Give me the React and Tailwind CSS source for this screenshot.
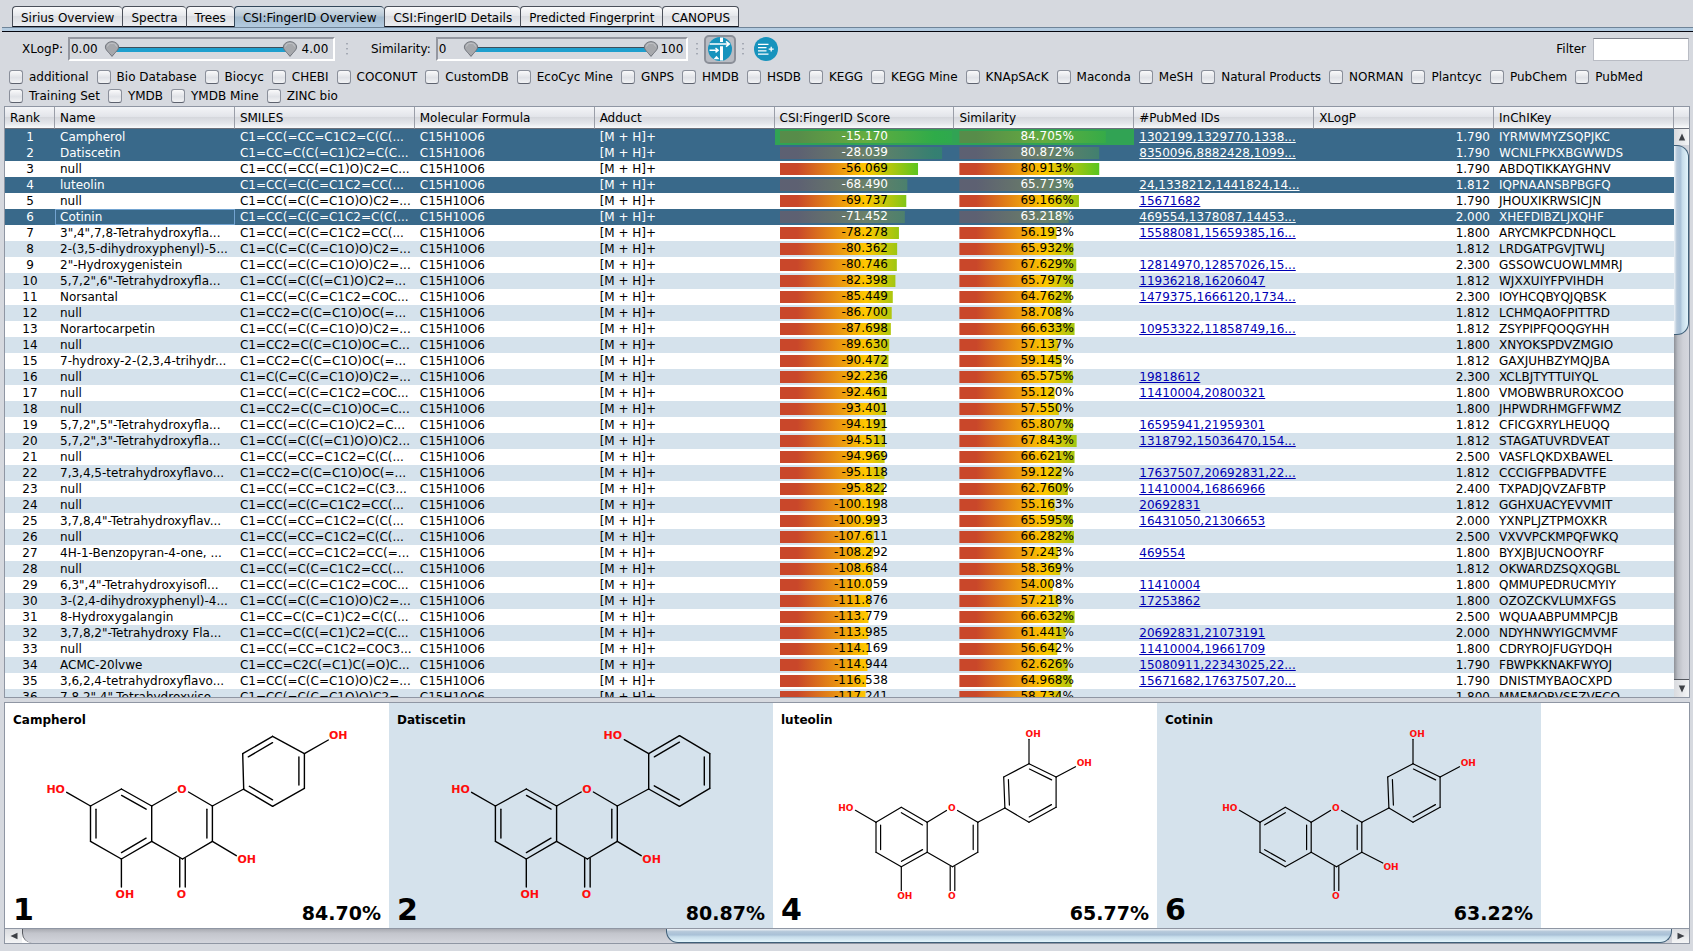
import React from "react";

const TABS = [
  "Sirius Overview",
  "Spectra",
  "Trees",
  "CSI:FingerID Overview",
  "CSI:FingerID Details",
  "Predicted Fingerprint",
  "CANOPUS",
];

const DATABASES = [
  "additional", "Bio Database", "Biocyc", "CHEBI", "COCONUT", "CustomDB", "EcoCyc Mine", "GNPS",
  "HMDB", "HSDB", "KEGG", "KEGG Mine", "KNApSAcK", "Maconda", "MeSH", "Natural Products", "NORMAN",
  "Plantcyc", "PubChem", "PubMed", "Training Set", "YMDB", "YMDB Mine", "ZINC bio",
];

const COLUMNS = [
  "Name", "SMILES", "Molecular Formula", "Adduct", "CSI:FingerID Score", "Similarity", "#PubMed IDs", "XLogP", "InChIKey",
];

// name, SMILES, score, similarity, PubMed ids, XLogP, InChIKey
const ROWS = [
  ["Campherol", "C1=CC(=CC=C1C2=C(C(...", "-15.170", "84.705", "1302199,1329770,1338...", "1.790", "IYRMWMYZSQPJKC"],
  ["Datiscetin", "C1=CC=C(C(=C1)C2=C(C...", "-28.039", "80.872", "8350096,8882428,1099...", "1.790", "WCNLFPKXBGWWDS"],
  ["null", "C1=CC(=CC(=C1)O)C2=C...", "-56.069", "80.913", "", "1.790", "ABDQTIKKAYGHNV"],
  ["luteolin", "C1=CC(=C(C=C1C2=CC(...", "-68.490", "65.773", "24,1338212,1441824,14...", "1.812", "IQPNAANSBPBGFQ"],
  ["null", "C1=CC(=C(C=C1O)O)C2=...", "-69.737", "69.166", "15671682", "1.790", "JHOUXIKRWSICJN"],
  ["Cotinin", "C1=CC(=C(C=C1C2=C(C(...", "-71.452", "63.218", "469554,1378087,14453...", "2.000", "XHEFDIBZLJXQHF"],
  ["3\",4\",7,8-Tetrahydroxyfla...", "C1=CC(=C(C=C1C2=CC(...", "-78.278", "56.193", "15588081,15659385,16...", "1.800", "ARYCMKPCDNHQCL"],
  ["2-(3,5-dihydroxyphenyl)-5...", "C1=C(C=C(C=C1O)O)C2=...", "-80.362", "65.932", "", "1.812", "LRDGATPGVJTWLJ"],
  ["2\"-Hydroxygenistein", "C1=CC(=C(C=C1O)O)C2=...", "-80.746", "67.629", "12814970,12857026,15...", "2.300", "GSSOWCUOWLMMRJ"],
  ["5,7,2\",6\"-Tetrahydroxyfla...", "C1=CC(=C(C(=C1)O)C2=...", "-82.398", "65.797", "11936218,16206047", "1.812", "WJXXUIYFPVIHDH"],
  ["Norsantal", "C1=CC(=C(C=C1C2=COC...", "-85.449", "64.762", "1479375,1666120,1734...", "2.300", "IOYHCQBYQJQBSK"],
  ["null", "C1=CC2=C(C=C1O)OC(=...", "-86.700", "58.708", "", "1.812", "LCHMQAOFPITTRD"],
  ["Norartocarpetin", "C1=CC(=C(C=C1O)O)C2=...", "-87.698", "66.633", "10953322,11858749,16...", "1.812", "ZSYPIPFQOQGYHH"],
  ["null", "C1=CC2=C(C=C1O)OC=C...", "-89.630", "57.137", "", "1.800", "XNYOKSPDVZMGIO"],
  ["7-hydroxy-2-(2,3,4-trihydr...", "C1=CC2=C(C=C1O)OC(=...", "-90.472", "59.145", "", "1.812", "GAXJUHBZYMQJBA"],
  ["null", "C1=C(C=C(C=C1O)O)C2=...", "-92.236", "65.575", "19818612", "2.300", "XCLBJTYTTUIYQL"],
  ["null", "C1=CC(=C(C=C1C2=COC...", "-92.461", "55.120", "11410004,20800321", "1.800", "VMOBWBRUROXCOO"],
  ["null", "C1=CC2=C(C=C1O)OC=C...", "-93.401", "57.550", "", "1.800", "JHPWDRHMGFFWMZ"],
  ["5,7,2\",5\"-Tetrahydroxyfla...", "C1=CC(=C(C=C1O)C2=C...", "-94.191", "65.807", "16595941,21959301", "1.812", "CFICGXRYLHEUQQ"],
  ["5,7,2\",3\"-Tetrahydroxyfla...", "C1=CC(=C(C(=C1)O)O)C2...", "-94.511", "67.843", "1318792,15036470,154...", "1.812", "STAGATUVRDVEAT"],
  ["null", "C1=CC(=CC=C1C2=C(C(...", "-94.969", "66.621", "", "2.500", "VASFLQKDXBAWEL"],
  ["7,3,4,5-tetrahydroxyflavo...", "C1=CC2=C(C=C1O)OC(=...", "-95.118", "59.122", "17637507,20692831,22...", "1.812", "CCCIGFPBADVTFE"],
  ["null", "C1=CC(=CC=C1C2=C(C3...", "-95.822", "62.760", "11410004,16866966", "2.400", "TXPADJQVZAFBTP"],
  ["null", "C1=CC(=C(C=C1C2=CC(...", "-100.198", "55.163", "20692831", "1.812", "GGHXUACYEVVMIT"],
  ["3,7,8,4\"-Tetrahydroxyflav...", "C1=CC(=CC=C1C2=C(C(...", "-100.993", "65.595", "16431050,21306653", "2.000", "YXNPLJZTPMOXKR"],
  ["null", "C1=CC(=CC=C1C2=C(C(...", "-107.611", "66.282", "", "2.500", "VXVVPCKMPQFWKQ"],
  ["4H-1-Benzopyran-4-one, ...", "C1=CC(=CC=C1C2=CC(=...", "-108.292", "57.243", "469554", "1.800", "BYXJBJUCNOOYRF"],
  ["null", "C1=CC(=C(C=C1C2=CC(...", "-108.684", "58.369", "", "1.812", "OKWARDZSQXQGBL"],
  ["6,3\",4\"-Tetrahydroxyisofl...", "C1=CC(=C(C=C1C2=COC...", "-110.059", "54.008", "11410004", "1.800", "QMMUPEDRUCMYIY"],
  ["3-(2,4-dihydroxyphenyl)-4...", "C1=CC(=C(C=C1O)O)C2=...", "-111.876", "57.218", "17253862", "1.800", "OZOZCKVLUMXFGS"],
  ["8-Hydroxygalangin", "C1=CC=C(C=C1)C2=C(C(...", "-113.779", "66.632", "", "2.500", "WQUAABPUMMPCJB"],
  ["3,7,8,2\"-Tetrahydroxy Fla...", "C1=CC=C(C(=C1)C2=C(C...", "-113.985", "61.441", "20692831,21073191", "2.000", "NDYHNWYIGCMVMF"],
  ["null", "C1=CC(=CC=C1C2=COC3...", "-114.169", "56.642", "11410004,19661709", "1.800", "CDRYROJFUGYDQH"],
  ["ACMC-20lvwe", "C1=CC=C2C(=C1)C(=O)C...", "-114.944", "62.626", "15080911,22343025,22...", "1.790", "FBWPKKNAKFWYOJ"],
  ["3,6,2,4-tetrahydroxyflavo...", "C1=CC(=C(C=C1O)O)C2=...", "-116.538", "64.968", "15671682,17637507,20...", "1.790", "DNISTMYBAOCXPD"],
  ["7,8,2\",4\"-Tetrahydroxyiso...", "C1=CC(=C(C=C1O)O)C2=...", "-117.241", "58.734", "", "1.800", "MMEMQRVSEZVECO"],
];

const SELECTED = new Set([1, 2, 4, 6]);

const scoreShare = (score) => Math.min(100, 108 - 0.497 * Math.abs(score));

function Bar({ share, text, selected, best, textWidth }) {
  return (
    <div className={`grid h-4 pr-0.5 pl-[5px] ${best ? "bg-[#31a354]" : ""}`}>
      <div
        className={`col-start-1 row-start-1 h-3 self-center bg-[linear-gradient(90deg,#c9472a_0%,#c9472a_10%,#ffc800_50%,#28c428_90%,#28b93c_100%)] ${selected ? "opacity-25" : ""}`}
        style={{ clipPath: `inset(0 ${100 - share}% 0 0)` }}
      />
      <span className={`relative col-start-1 row-start-1 flex justify-end justify-self-center leading-[15px] ${textWidth}`}>{text}</span>
    </div>
  );
}

function Dots() {
  return (
    <svg className="h-3 w-0.5" viewBox="0 0 2 12" aria-hidden="true">
      {[0, 5, 10].map((y) => (
        <rect key={y} y={y} width="2" height="1.4" fill="#a4a9b3" />
      ))}
    </svg>
  );
}

function Knob() {
  return (
    <svg className="z-10 h-4 w-4 shrink-0" viewBox="0 0 16 16" aria-hidden="true">
      <path d="M8 .7C4.2.7 1.4 3.2 1.4 6.2c0 2.6 3.6 5.4 6.6 9.2 3-3.8 6.6-6.6 6.6-9.2C14.6 3.2 11.8.7 8 .7z" fill="#a6a8ac" stroke="#6c7078" strokeWidth="1" />
      <path d="M3.5 5.5C4 3.2 6 2.2 8 2.2s4 1 4.5 3.3" fill="none" stroke="#c4c6ca" strokeWidth="1" />
    </svg>
  );
}

function RangeBox({ label, low, high, max, width, lowWidth, highWidth }) {
  return (
    <fieldset className="flex items-center gap-[5px]">
      <legend className="float-left">{label}</legend>
      <div className={`flex h-6 items-center border-2 border-[#9497a0] border-r-white border-b-white px-px ${width}`}>
        <output className={lowWidth}>{low}</output>
        <div className="relative flex flex-1 items-center">
          <Knob />
          <div className="-mx-2 h-[5px] flex-1 border-t border-[#3d4f5c] bg-[#1e9fce]" />
          <Knob />
          <input type="range" aria-label={`${label} minimum`} min="0" max={max} defaultValue="0" className="absolute left-0 h-4 w-1/2 opacity-0" />
          <input type="range" aria-label={`${label} maximum`} min="0" max={max} defaultValue={max} className="absolute right-0 h-4 w-1/2 opacity-0" />
        </div>
        <output className={`text-center ${highWidth}`}>{high}</output>
      </div>
    </fieldset>
  );
}

function FilterIcon() {
  return (
    <svg className="h-6 w-6" viewBox="0 0 24 24" aria-hidden="true">
      <circle cx="12" cy="12" r="12" fill="#1793bd" />
      <path d="M12 .6h3V5h-3zM12 9.2h3v14.2h-3z" fill="#fff" />
      <path d="M1.5 7H21M18 4.3 21.3 7 18 9.7M1.5 13.2h8M7.5 11l2.6 2.2-2.6 2.2" fill="none" stroke="#fff" strokeWidth="1.5" />
      <path d="M5.5 22.3l3-3.6 3 3.6z" fill="#fff" />
    </svg>
  );
}

function ListPlusIcon() {
  return (
    <svg className="h-6 w-6" viewBox="0 0 24 24" aria-hidden="true">
      <circle cx="12" cy="12" r="12" fill="#1793bd" />
      <path d="M4 7.3h10.5M4 10.6h8.5M4 13.9h8.5M4 17.2h10.5M14.7 12.2h5M17.2 9.8v4.8" fill="none" stroke="#fff" strokeWidth="1.3" />
    </svg>
  );
}

// Line parallel to bond a-b, moved towards the ring centre and shortened at both ends.
function innerBond(a, b, c, d) {
  const len = Math.hypot(b[0] - a[0], b[1] - a[1]);
  const u = [(b[0] - a[0]) / len, (b[1] - a[1]) / len];
  let n = [-u[1], u[0]];
  if (n[0] * (c[0] - a[0]) + n[1] * (c[1] - a[1]) < 0) n = [-n[0], -n[1]];
  const s = d * 0.6;
  return [a[0] + n[0] * d + u[0] * s, a[1] + n[1] * d + u[1] * s, b[0] + n[0] * d - u[0] * s, b[1] + n[1] * d - u[1] * s];
}

function Molecule({ rings, bonds, labels, ketone, gap, size }) {
  const lines = [...bonds];
  rings.forEach(({ atoms, double, open = [] }) => {
    const c = [0, 1].map((k) => atoms.reduce((sum, p) => sum + p[k], 0) / atoms.length);
    atoms.forEach((a, i) => {
      const b = atoms[(i + 1) % atoms.length];
      if (!open.includes(i)) lines.push([...a, ...b]);
      if (double.includes(i)) lines.push(innerBond(a, b, c, gap));
    });
  });
  const [kx, ky0, ky1] = ketone;
  lines.push([kx - gap / 2, ky0, kx - gap / 2, ky1], [kx + gap / 2, ky0, kx + gap / 2, ky1]);
  return (
    <svg className="col-start-1 row-start-1 w-full" viewBox="0 0 384 225" aria-hidden="true">
      <g stroke="#000" strokeWidth={size > 10 ? 1.4 : 1.2} strokeLinecap="round">
        {lines.map(([x1, y1, x2, y2], i) => (
          <line key={i} x1={x1} y1={y1} x2={x2} y2={y2} />
        ))}
      </g>
      <g fill="#ff0d0d" fontSize={size} fontWeight="700" textAnchor="middle">
        {labels.map(([t, x, y]) => (
          <text key={`${t}${x}${y}`} x={x} y={y + size * 0.37}>{t}</text>
        ))}
      </g>
    </svg>
  );
}

const big = (dx) => ({
  a: [[85.5 + dx, 103], [116.4 + dx, 86], [146.7 + dx, 103], [146.7 + dx, 138.3], [116.4 + dx, 156], [85.5 + dx, 138.3]],
  c2: [207.4 + dx, 103],
  c3: [207.4 + dx, 138.3],
  c4: [177.5 + dx, 156],
  bonds: [
    [61.7 + dx, 89.3, 85.5 + dx, 103],
    [146.7 + dx, 103, 171.3 + dx, 89],
    [183.5 + dx, 89, 207.4 + dx, 103],
    [207.4 + dx, 138.3, 231.3 + dx, 152.7],
    [116.4 + dx, 156, 116.4 + dx, 184],
    [207.4 + dx, 103, 238.7 + dx, 86],
  ],
  labels: [
    ["HO", 50.7 + dx, 85.7], ["O", 177 + dx, 85.7], ["OH", 241.7 + dx, 156], ["OH", 119.9 + dx, 191], ["O", 176.5 + dx, 191],
  ],
});

function bigMolecule(dx, ringB, extraBond, extraLabel) {
  const m = big(dx);
  return {
    gap: 5.5,
    size: 11,
    rings: [
      { atoms: m.a, double: [1, 3, 5] },
      { atoms: [m.a[2], [177 + dx, 86], m.c2, m.c3, m.c4, m.a[3]], double: [2], open: [0, 1, 5] },
      ringB,
    ],
    bonds: [...m.bonds, extraBond],
    labels: [...m.labels, extraLabel],
    ketone: [m.c4[0], 155.5, 184],
  };
}

const smallA = [[103, 119.3], [128.3, 104.3], [154.2, 119.3], [154.2, 149.3], [128.3, 163.7], [103, 149.3]];

function smallMolecule(doubleA, bonds, labels) {
  return {
    gap: 4.6,
    size: 9,
    rings: [
      { atoms: smallA, double: doubleA },
      { atoms: [smallA[2], [178.9, 104.3], [204.8, 119.3], [204.8, 149.3], [179.5, 163.7], smallA[3]], double: [2], open: [0, 1, 5] },
      { atoms: [[231.9, 105], [230.7, 74], [256, 60.7], [283.1, 74], [283.1, 104.3], [256, 119.3]], double: [0, 2, 4] },
    ],
    bonds: [
      [82.4, 107.3, 103, 119.3],
      [154.2, 119.3, 173.5, 107.5],
      [184.5, 107.5, 204.8, 119.3],
      [204.8, 119.3, 231.9, 105],
      [256, 60.7, 256, 36.3],
      [283.1, 74, 302.5, 63.7],
      ...bonds,
    ],
    labels: [["HO", 72.9, 104.3], ["O", 178.9, 104.3], ["OH", 260.1, 30.3], ["OH", 311.3, 60], ["O", 178.9, 193], ...labels],
    ketone: [179.5, 163.5, 187.5],
  };
}

const CARDS = [
  {
    rank: 1, name: "Campherol", similarity: "84.70%",
    mol: bigMolecule(
      0,
      { atoms: [[238.7, 86.3], [237.7, 50.7], [267.6, 33.3], [299.4, 50.7], [299.4, 85.3], [267.6, 103.3]], double: [1, 3, 5] },
      [299.4, 50.7, 323.3, 37],
      ["OH", 333.3, 32.3]
    ),
  },
  {
    rank: 2, name: "Datiscetin", similarity: "80.87%",
    mol: bigMolecule(
      20.9,
      { atoms: [[259.7, 86], [259.7, 50.7], [290.5, 32.7], [320.8, 50.7], [320.8, 85.3], [290.5, 103.3]], double: [1, 3, 5] },
      [259.7, 50.7, 235.3, 36.7],
      ["HO", 223.8, 32.3]
    ),
  },
  {
    rank: 4, name: "luteolin", similarity: "65.77%",
    mol: smallMolecule([1, 3, 5], [[128.3, 163.7, 128.3, 187.5]], [["OH", 131.8, 193]]),
  },
  {
    rank: 6, name: "Cotinin", similarity: "63.22%",
    mol: smallMolecule([0, 2, 4], [[204.8, 149.3, 225.8, 160]], [["OH", 234, 163.7]]),
  },
];

const headerFace = "bg-[linear-gradient(180deg,#f4f5f8_0%,#e3e5ea_45%,#d6d8dd_50%,#e6e8ec_80%,#fafbfc_100%)]";

export default function App() {
  return (
    <div className="flex h-screen flex-col overflow-hidden bg-[#d6d9df] pb-[7px] font-['DejaVu_Sans',sans-serif] text-[12px] leading-4 text-black">
      <nav role="tablist" className="flex pt-1.5 pl-3">
        {TABS.map((tab) => {
          const active = tab === "CSI:FingerID Overview";
          return (
            <button
              key={tab}
              type="button"
              role="tab"
              aria-selected={active}
              className={`h-[21px] rounded-t-[4px] border-t border-l px-2 pt-0.5 whitespace-nowrap last:border-r ${
                active
                  ? "border-[#33475a] bg-[linear-gradient(180deg,#dbe3ea_0%,#b7c8d6_45%,#a3bacd_50%,#b3cbe0_100%)]"
                  : "border-[#4b505a] border-b border-b-[#10131c] bg-[linear-gradient(180deg,#fbfbfc_0%,#e6e8ec_45%,#dbdde2_50%,#eceef1_100%)]"
              }`}
            >
              {tab}
            </button>
          );
        })}
      </nav>
      <div className="ml-0.5 h-[5px] shrink-0 border-t border-b border-t-[#6f8498] border-b-[#05060f] bg-[#b3cbe0]" />

      <div className="flex h-[34px] shrink-0 items-center pr-1 pl-[22px]">
        <RangeBox label="XLogP:" low="0.00" high="4.00" max="4" width="w-[267px]" lowWidth="w-[33px]" highWidth="w-[34px]" />
        <div className="mx-[11px]"><Dots /></div>
        <div className="ml-3">
          <RangeBox label="Similarity:" low="0" high="100" max="100" width="w-[252px]" lowWidth="w-6" highWidth="w-[26px]" />
        </div>
        <div className="ml-2"><Dots /></div>
        <button
          type="button"
          aria-label="Filter by range"
          aria-pressed="true"
          className="ml-1.5 grid h-[29px] w-8 place-items-center rounded-[5px] border-2 border-[#8b8f98] bg-[#b9bcc3]"
        >
          <FilterIcon />
        </button>
        <div className="mx-1.5"><Dots /></div>
        <button type="button" aria-label="Load more candidates" className="ml-1 grid h-6 w-6 place-items-center">
          <ListPlusIcon />
        </button>
        <label htmlFor="filter" className="ml-auto pr-[7px]">Filter</label>
        <input id="filter" type="text" className="h-[23px] w-24 border border-[#b9bcc4] border-t-[#7c808a] bg-white px-1.5 outline-none" />
      </div>

      <div className="flex shrink-0 flex-wrap gap-x-2 py-px pl-[9px]">
        {DATABASES.map((db) => (
          <label key={db} className="flex h-[19px] items-center gap-1.5 whitespace-nowrap">
            <input
              type="checkbox"
              className="h-3.5 w-3.5 appearance-none rounded-[3px] border border-[#8a8f9a] border-b-[#5d626e] bg-[linear-gradient(180deg,#fafafb_0%,#e0e2e7_55%,#f2f3f5_100%)]"
            />
            {db}
          </label>
        ))}
      </div>

      <section className="mr-[3px] ml-1 flex min-h-0 flex-1 overflow-hidden border border-[#8f96a3] bg-white">
        <div className="min-w-0 flex-1">
          <table className="w-full table-fixed border-separate border-spacing-0">
            <thead>
              <tr>
                <th className={`h-[22px] w-[50px] border-r border-b border-r-[#9a9ea8] border-b-[#6b707b] p-0 pl-[5px] text-left font-normal ${headerFace}`}>Rank</th>
                {COLUMNS.map((c) => (
                  <th key={c} className={`h-[22px] border-r border-b border-r-[#9a9ea8] border-b-[#6b707b] p-0 pl-[5px] text-left font-normal whitespace-nowrap ${headerFace}`}>
                    {c}
                  </th>
                ))}
              </tr>
            </thead>
            <tbody>
              {ROWS.map(([name, smiles, score, similarity, pubmed, xlogp, key], i) => {
                const rank = i + 1;
                const selected = SELECTED.has(rank);
                const tone = selected ? "bg-[#39698a] text-white" : rank % 2 ? "bg-white" : "bg-[#d5e2ec]";
                const cell = "h-4 p-0 pl-[5px] whitespace-nowrap";
                return (
                  <tr key={rank} className={tone}>
                    <td className="h-4 p-0 text-center">{rank}</td>
                    <td className={`${cell} ${rank === 6 ? "shadow-[inset_0_0_0_1px_#73a4d1]" : ""}`}>{name}</td>
                    <td className={cell}>{smiles}</td>
                    <td className={cell}>C15H10O6</td>
                    <td className={cell}>[M + H]+</td>
                    <td className="h-4 p-0">
                      <Bar share={scoreShare(score)} text={score} selected={selected} best={rank === 1} textWidth="w-11" />
                    </td>
                    <td className="h-4 p-0">
                      <Bar share={Number(similarity)} text={`${similarity}%`} selected={selected} best={rank === 1} textWidth="w-14" />
                    </td>
                    <td className={cell}>
                      {pubmed && (
                        <a href="#pubmed" className={`underline ${selected ? "text-white" : "text-[#0000b4]"}`}>{pubmed}</a>
                      )}
                    </td>
                    <td className="h-4 p-0 pr-1 text-right">{xlogp}</td>
                    <td className={cell}>{key}</td>
                  </tr>
                );
              })}
            </tbody>
          </table>
        </div>
        <div className="flex w-[15px] shrink-0 flex-col">
          <div className={`h-[22px] border-b border-b-[#6b707b] ${headerFace}`} />
          <div className="grid h-4 place-items-center bg-[linear-gradient(90deg,#d9dbdf,#f4f5f6)]">
            <svg className="h-2 w-2" viewBox="0 0 8 8" aria-hidden="true"><path d="M4 .5 7.2 7.5H.8z" fill="#3d4046" /></svg>
          </div>
          <div className="flex-1 bg-[linear-gradient(90deg,#8d9097_0%,#b9bcc3_25%,#cfd1d8_60%,#d5d7de_100%)]">
            <div className="h-[190px] rounded-r-[12px] border border-l-0 border-[#3f5f78] bg-[linear-gradient(90deg,#f0f4f8_0%,#b5c8da_20%,#a9c1d7_45%,#c6dcea_60%,#e2f4fb_100%)]" />
          </div>
          <div className="grid h-[18px] place-items-center border-t border-[#55585f] bg-[linear-gradient(90deg,#d9dbdf,#f4f5f6)]">
            <svg className="h-2 w-2" viewBox="0 0 8 8" aria-hidden="true"><path d="M4 7.5.8.5h6.4z" fill="#3d4046" /></svg>
          </div>
        </div>
      </section>

      <section className="mt-1 mr-[3px] ml-1 shrink-0 border border-[#8f96a3] bg-white">
        <div className="flex overflow-hidden">
          {CARDS.map(({ rank, name, similarity, mol }, i) => (
            <article key={rank} className={`grid h-[225px] w-96 shrink-0 ${i % 2 ? "bg-[#d5e2ec]" : "bg-white"}`}>
              <Molecule {...mol} />
              <div className="relative col-start-1 row-start-1 flex flex-col justify-between px-2 pt-[9px] font-bold">
                <h2>{name}</h2>
                <div className="flex items-baseline justify-between">
                  <span className="text-[30px] leading-9">{rank}</span>
                  <span className="text-[19px]">{similarity}</span>
                </div>
              </div>
            </article>
          ))}
        </div>
        <div className="flex h-[15px] border-t border-[#8f96a3]">
          <div className="grid w-[17px] place-items-center bg-[linear-gradient(180deg,#d9dbdf,#f4f5f6)]">
            <svg className="h-2 w-2" viewBox="0 0 8 8" aria-hidden="true"><path d="M.5 4 7.5.8v6.4z" fill="#3d4046" /></svg>
          </div>
          <div className="flex flex-1 justify-end rounded-bl-[10px] border-l border-[#55585f] bg-[linear-gradient(180deg,#a9abb2_0%,#c3c5cc_30%,#d3d5dc_100%)]">
            <div className="w-[61%] rounded-b-[12px] border border-t-0 border-[#3f5f78] bg-[linear-gradient(180deg,#f0f4f8_0%,#b5c8da_20%,#a9c1d7_45%,#c6dcea_60%,#e2f4fb_100%)]" />
          </div>
          <div className="grid w-[17px] place-items-center bg-[linear-gradient(180deg,#d9dbdf,#f4f5f6)]">
            <svg className="h-2 w-2" viewBox="0 0 8 8" aria-hidden="true"><path d="M7.5 4 .5.8v6.4z" fill="#3d4046" /></svg>
          </div>
        </div>
      </section>
    </div>
  );
}
